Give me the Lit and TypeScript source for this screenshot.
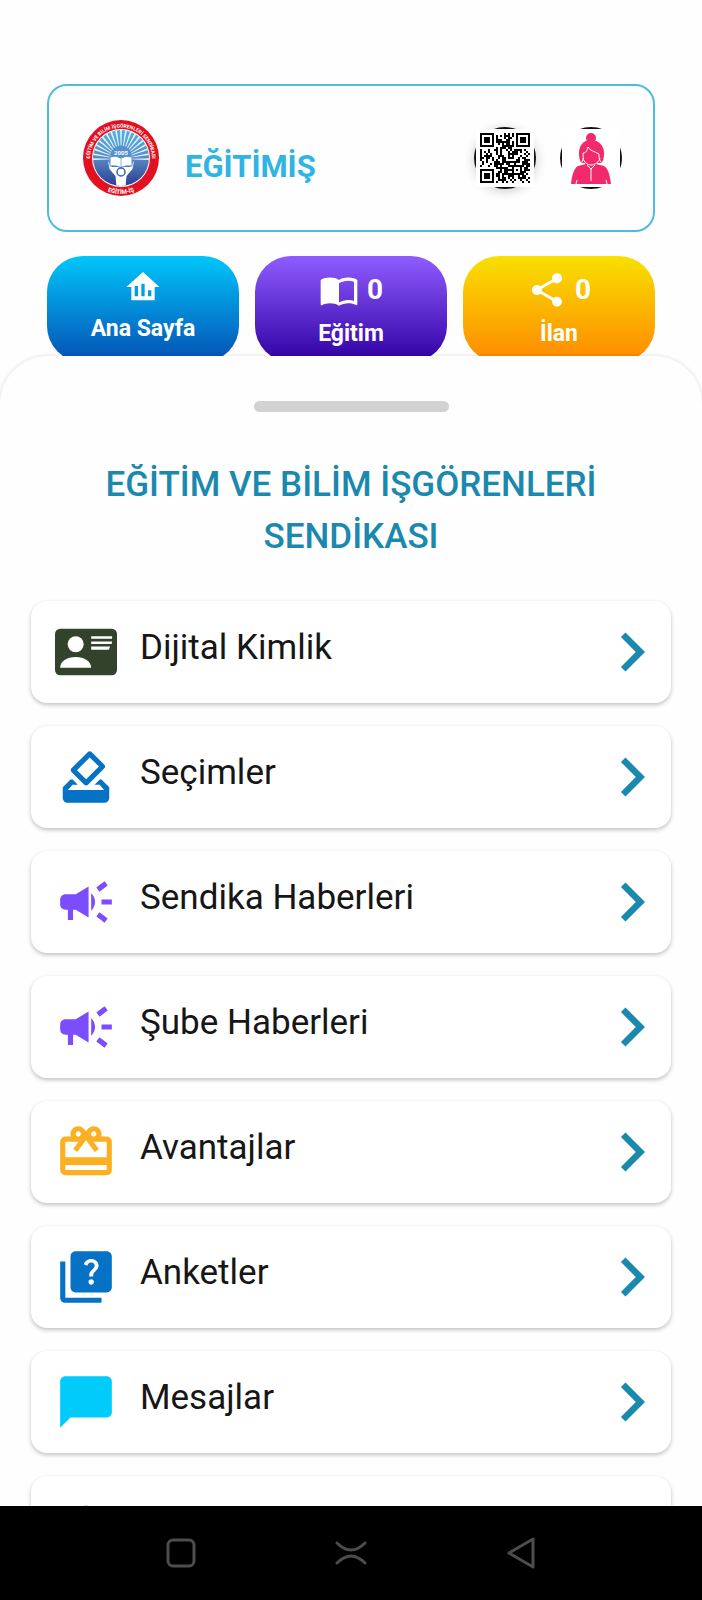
import { LitElement, html, css, svg } from 'lit';

const icons = {
  vote: svg`<path d="M18 13h-.68l-2 2h1.91L19 17H5l1.78-2h2.05l-2-2H6l-3 3v4c0 1.1.89 2 1.99 2H19c1.1 0 2-.89 2-2v-4l-3-3zm-1-5.05l-4.95 4.95-3.54-3.54 4.95-4.95L17 7.95zm-4.24-5.66L6.39 8.66c-.39.39-.39 1.02 0 1.41l4.95 4.95c.39.39 1.02.39 1.41 0l6.36-6.36c.39-.39.39-1.02 0-1.41L14.16 2.3c-.38-.4-1.01-.4-1.4-.01z"/>`,
  campaign: svg`<path d="M18 11v2h4v-2h-4zm-2 6.61c.96.71 2.21 1.65 3.2 2.39.4-.53.8-1.07 1.2-1.6-.99-.74-2.24-1.68-3.2-2.4-.4.54-.8 1.08-1.2 1.61zM20.4 5.6c-.4-.53-.8-1.07-1.2-1.6-.99.74-2.24 1.68-3.2 2.4.4.53.8 1.07 1.2 1.6.96-.72 2.21-1.65 3.2-2.4zM4 9c-1.1 0-2 .9-2 2v2c0 1.1.9 2 2 2h1v4h2v-4h1l5 3V6L8 9H4zm11.5 3c0-1.33-.58-2.53-1.5-3.35v6.69c.92-.81 1.5-2.01 1.5-3.34z"/>`,
  gift: svg`<path d="M20 6h-2.18c.11-.31.18-.65.18-1 0-1.66-1.34-3-3-3-1.05 0-1.96.54-2.5 1.35l-.5.67-.5-.68C10.96 2.54 10.05 2 9 2 7.34 2 6 3.34 6 5c0 .35.07.69.18 1H4c-1.11 0-1.99.89-1.99 2L2 19c0 1.11.89 2 2 2h16c1.11 0 2-.89 2-2V8c0-1.11-.89-2-2-2zm-5-2c.55 0 1 .45 1 1s-.45 1-1 1-1-.45-1-1 .45-1 1-1zM9 4c.55 0 1 .45 1 1s-.45 1-1 1-1-.45-1-1 .45-1 1-1zm11 15H4v-2h16v2zm0-5H4V8h5.08L7 10.83 8.62 12 11 8.76l1-1.36 1 1.36L15.38 12 17 10.83 14.92 8H20v6z"/>`,
  quiz: svg`<path d="M4 6H2v14c0 1.1.9 2 2 2h14v-2H4V6z"/><path d="M20 2H8c-1.1 0-2 .9-2 2v12c0 1.1.9 2 2 2h12c1.1 0 2-.9 2-2V4c0-1.1-.9-2-2-2zm-5.99 13c-.59 0-1.05-.47-1.05-1.05 0-.59.47-1.04 1.05-1.04.59 0 1.04.45 1.04 1.04-.01.58-.45 1.05-1.04 1.05zm2.5-6.17c-.63.93-1.23 1.21-1.56 1.81-.13.24-.18.4-.18 1.18h-1.52c0-.41-.06-1.08.26-1.65.41-.73 1.18-1.16 1.63-1.8.48-.68.21-1.94-1.14-1.94-.88 0-1.32.67-1.5 1.23l-1.37-.57C11.51 5.96 12.52 5 13.99 5c1.23 0 2.08.56 2.51 1.26.37.61.58 1.73.01 2.57z"/>`,
  chat: svg`<path d="M20 2H4c-1.1 0-1.99.9-1.99 2L2 22l4-4h14c1.1 0 2-.9 2-2V4c0-1.1-.9-2-2-2z"/>`,
  idCard: svg`<rect y="3" width="24" height="18" rx="2"/><g fill="#fff"><circle cx="8" cy="9" r="3.1"/><path d="M2 18.1c0-2.6 2.6-4.2 6-4.2s6 1.6 6 4.2zM14 5.9h8.1v1H14zM14 7.900h8.1l-.2 1H14zM14 9.900h7.300l-.4 1.200H14z"/></g>`,
  person: svg`<circle cx="12" cy="7.800" r="4"/><path d="M4 20c0-4 4-6 8-6s8 2 8 6z"/>`,
  home: svg`<path fill-rule="evenodd" d="M21.900 12H19v8H5v-8H2l10-9zM9 17.600v-6.200H7v6.200zM13 17.600V10h-2v7.600zM17 17.600V14h-2v3.600z"/>`,
  book: svg`<path d="M21 5c-1.110-.35-2.330-.5-3.500-.5-1.950 0-4.050.4-5.500 1.500-1.450-1.100-3.550-1.500-5.500-1.500S2.450 4.900 1 6v14.650c0 .25.25.5.5.5.1 0 .15-.05.25-.05C3.100 20.450 5.050 20 6.500 20c1.950 0 4.050.4 5.500 1.500 1.350-.85 3.800-1.500 5.500-1.500 1.650 0 3.350.3 4.750 1.050.1.05.15.05.25.05.25 0 .5-.25.5-.5V6c-.6-.45-1.250-.75-2-1zm0 13.500c-1.100-.35-2.300-.5-3.500-.5-1.700 0-4.150.65-5.500 1.500V8c1.350-.85 3.800-1.500 5.500-1.500 1.200 0 2.400.15 3.500.5v11.500z"/>`,
  share: svg`<path d="M18 16.080c-.76 0-1.440.3-1.960.77L8.910 12.700c.05-.23.09-.46.09-.7s-.04-.47-.09-.7l7.050-4.110c.54.5 1.250.81 2.040.81 1.660 0 3-1.340 3-3s-1.340-3-3-3-3 1.340-3 3c0 .24.04.47.09.7L8.040 9.810C7.500 9.310 6.790 9 6 9c-1.660 0-3 1.340-3 3s1.340 3 3 3c.79 0 1.500-.31 2.040-.81l7.120 4.160c-.05.21-.08.43-.08.65 0 1.610 1.310 2.920 2.920 2.920s2.920-1.310 2.920-2.920-1.310-2.920-2.920-2.920z"/>`,
};

// 25 x 25 modules, three finder squares and filler in between
function qrPath() {
  const size = 25;
  let seed = 2005;
  let d = '';
  const finder = (x: number, y: number) => {
    for (const [fx, fy] of [[0, 0], [18, 0], [0, 18]]) {
      const dx = x - fx;
      const dy = y - fy;
      if (dx >= -1 && dx <= 7 && dy >= -1 && dy <= 7) {
        const ring = Math.max(Math.abs(dx - 3), Math.abs(dy - 3));
        return ring === 3 || ring < 2;
      }
    }
    return null;
  };
  for (let y = 0; y < size; y++) {
    for (let x = 0; x < size; x++) {
      seed = (seed * 1103515245 + 12345) % 2147483648;
      let dark = finder(x, y);
      if (dark === null) {
        const ring = Math.max(Math.abs(x - 18), Math.abs(y - 18));
        dark = ring <= 2 ? ring !== 1 : seed / 2147483648 < 0.54;
      }
      if (dark) d += `M${x} ${y}h1v1h-1z`;
    }
  }
  return d;
}

const rays = Array.from({ length: 19 }, (_, i) => (i - 9) * 10);

export class UnionLogo extends LitElement {

  static get styles() {
    return css`
      :host{
        display: block;
      }
      .logo{
        display: block;
        width: 76px;
        height: 76px;
        font-family: Roboto, sans-serif;
        font-weight: 700;
        fill: #ffffff;
        text-anchor: middle;
      }
    `;
  }

  render() {
    return html`
      <svg class="logo" viewBox="0 0 152 152" role="img" aria-label="Logo">
        <defs>
          <linearGradient id="sky" x1="0" y1="0" x2="0" y2="1">
            <stop offset="0" stop-color="#4fb2e0"/>
            <stop offset=".45" stop-color="#5c8fc8"/>
            <stop offset="1" stop-color="#2a3d92"/>
          </linearGradient>
          <clipPath id="disc"><circle cx="76" cy="76" r="56"/></clipPath>
          <path id="top" d="M17 96A62 62 0 1 1 135 96"/>
          <path id="bottom" d="M4 76A72 72 0 0 0 148 76"/>
        </defs>
        <circle cx="76" cy="76" r="76" fill="#e3101f"/>
        <circle cx="76" cy="76" r="58"/>
        <circle cx="76" cy="76" r="56" fill="url(#sky)"/>
        <g clip-path="url(#disc)">
          ${rays.map(a => svg`<path d="M76 78L74 14h4z" fill="#e4f4fb" transform="rotate(${a} 76 78)"/>`)}
          <circle cx="76" cy="72" r="21" fill="#5590cc"/>
          <path d="M50 82l8 12h36l8-12-3 16-12 14-2 22H67l-2-22-12-14z"/>
          <path d="M54 74q12-4 22 2 10-6 22-2v18q-12-2-22 3-10-5-22-3z" stroke="#5590cc" stroke-width="2"/>
          <path d="M76 76v18" stroke="#8fb2da" stroke-width="2"/>
          <circle cx="76" cy="104" r="8" stroke="#3d5fae" stroke-width="3"/>
        </g>
        <text x="76" y="70" font-size="12">2005</text>
        <text font-size="10"><textPath href="#top" startOffset="50%">EĞİTİM VE BİLİM İŞGÖRENLERİ SENDİKASI</textPath></text>
        <text font-size="12"><textPath href="#bottom" startOffset="50%">EĞİTİM-İŞ</textPath></text>
      </svg>
    `;
  }
}
customElements.define('union-logo', UnionLogo);

export class MenuRow extends LitElement {

  static get properties() {
    return {
      label: {type: String},
      icon: {type: String},
      color: {type: String},
    };
  }

  static get styles() {
    return css`
      :host{
        display: block;
      }
      .row{
        display: flex;
        align-items: center;
        height: 102px;
        padding-left: 24px;
        border-radius: 16px;
        background-color: #ffffff;
        box-shadow: 0 2px 4px rgba(0, 0, 0, 0.24), 0 0 1px rgba(0, 0, 0, 0.04);
        color: #161616;
        text-decoration: none;
      }
      .row__icon{
        flex: none;
        width: 62px;
        height: 62px;
      }
      .row__label{
        flex: 1;
        padding: 0 0 8px 23px;
        font-size: 35px;
        line-height: 44px;
      }
      .row__arrow{
        flex: none;
        width: 78px;
        height: 78px;
        fill: #1b89ae;
      }
    `;
  }

  render() {
    return html`
      <a class="row" href="#">
        <svg class="row__icon" viewBox="0 0 24 24" fill=${this.color} aria-hidden="true">${icons[this.icon]}</svg>
        <span class="row__label">${this.label}</span>
        <svg class="row__arrow" viewBox="0 0 24 24" aria-hidden="true">
          <path d="M10 6L8.590 7.410 13.170 12l-4.580 4.590L10 18l6-6z"/>
        </svg>
      </a>
    `;
  }
}
customElements.define('menu-row', MenuRow);

export class AppRoot extends LitElement {

  static get properties() {
    return {
      tiles: {type: Array},
      rows: {type: Array},
    };
  }

  constructor() {
    super();
    this.tiles = [
      {label: 'Ana Sayfa', icon: 'home', theme: 'tile--blue'},
      {label: 'Eğitim', icon: 'book', theme: 'tile--purple', count: 0},
      {label: 'İlan', icon: 'share', theme: 'tile--yellow', count: 0},
    ];
    this.rows = [
      {label: 'Dijital Kimlik', icon: 'idCard', color: '#33432b'},
      {label: 'Seçimler', icon: 'vote', color: '#0672c6'},
      {label: 'Sendika Haberleri', icon: 'campaign', color: '#7c4dff'},
      {label: 'Şube Haberleri', icon: 'campaign', color: '#7c4dff'},
      {label: 'Avantajlar', icon: 'gift', color: '#fcb021'},
      {label: 'Anketler', icon: 'quiz', color: '#0672c6'},
      {label: 'Mesajlar', icon: 'chat', color: '#00cbfb'},
      {label: '', icon: 'person', color: '#222222'},
    ];
  }

  static get styles() {
    return css`
      :host{
        display: flex;
        flex-direction: column;
        height: 100vh;
        background-color: #fefefe;
        font-family: Roboto, sans-serif;
      }
      button{
        border: 0;
        padding: 0;
        background: none;
        font: inherit;
        color: inherit;
      }
      .header{
        display: flex;
        align-items: center;
        box-sizing: border-box;
        height: 148px;
        margin: 84px 47px 0;
        padding: 0 31px 0 34px;
        border: 2px solid #4fbbdd;
        border-radius: 20px;
      }
      .header__name{
        flex: 1;
        margin: 0;
        padding: 18px 0 0 26px;
        color: #2fb4e4;
        font-size: 31px;
        line-height: 36px;
        font-weight: 700;
      }
      .header__actions{
        display: flex;
        gap: 24px;
      }
      .round{
        display: grid;
        place-items: center;
        width: 62px;
        height: 62px;
        border-radius: 50%;
        background-color: #111111;
      }
      .round--shadow{
        box-shadow: 0 2px 12px rgba(0, 0, 0, 0.2);
      }
      .round__picture{
        width: 58px;
        height: 58px;
        background-color: #ffffff;
      }
      .tiles{
        display: grid;
        grid-template-columns: repeat(3, 1fr);
        gap: 16px;
        margin: 24px 47px 0;
      }
      .tile{
        display: flex;
        flex-direction: column;
        align-items: center;
        gap: 8px;
        height: 106px;
        padding-top: 11px;
        border-radius: 36px;
        color: #ffffff;
        font-weight: 700;
      }
      .tile--blue{
        background: linear-gradient(#00c6fb, #0550b4);
      }
      .tile--purple{
        background: linear-gradient(#8e5cff, #3100a2);
      }
      .tile--yellow{
        background: linear-gradient(#f8e000, #ff8900);
      }
      .tile__top{
        display: flex;
        align-items: center;
        gap: 8px;
        font-size: 28px;
        line-height: 45px;
      }
      .tile__icon{
        width: 40px;
        height: 40px;
        fill: #ffffff;
      }
      .tile__label{
        font-size: 23px;
        line-height: 28px;
      }
      .sheet{
        position: relative;
        flex: 1;
        min-height: 0;
        margin-top: -6px;
        overflow: hidden;
        border-radius: 48px 48px 0 0;
        background-color: #fefefe;
        box-shadow: 0 0 4px rgba(0, 0, 0, 0.14);
      }
      .sheet__handle{
        width: 195px;
        height: 11px;
        margin: 45px auto 47px;
        border-radius: 6px;
        background-color: #d2d2d2;
      }
      .sheet__title{
        margin: 0 31px 38px;
        color: #1b89ae;
        font-size: 35px;
        line-height: 52px;
        font-weight: 500;
        text-align: center;
      }
      .sheet__list{
        display: flex;
        flex-direction: column;
        gap: 23px;
        margin: 0 31px;
      }
      .system{
        position: relative;
        display: flex;
        flex: none;
        justify-content: center;
        align-items: center;
        gap: 136px;
        height: 94px;
        background-color: #000000;
      }
      .system__icon{
        display: block;
        width: 34px;
        height: 34px;
        fill: none;
        stroke: #4d4d4d;
        stroke-width: 3;
        stroke-linecap: round;
        stroke-linejoin: round;
      }
    `;
  }

  renderTile(tile) {
    return html`
      <button class="tile ${tile.theme}">
        <span class="tile__top">
          <svg class="tile__icon" viewBox="0 0 24 24" aria-hidden="true">${icons[tile.icon]}</svg>
          ${tile.count === undefined ? '' : html`<span>${tile.count}</span>`}
        </span>
        <span class="tile__label">${tile.label}</span>
      </button>
    `;
  }

  render() {
    return html`
      <header class="header">
        <union-logo></union-logo>
        <h1 class="header__name">EĞİTİMİŞ</h1>
        <div class="header__actions">
          <button class="round round--shadow" aria-label="QR">
            <svg class="round__picture" viewBox="-2 -2 29 29" shape-rendering="crispEdges" aria-hidden="true">
              <path d=${qrPath()}/>
            </svg>
          </button>
          <button class="round" aria-label="Profil">
            <svg class="round__picture" viewBox="0 0 58 58" fill="#f12a6b" aria-hidden="true">
              <circle cx="29" cy="9" r="5"/>
              <path d="M29 11c-8 0-12 6-12 13 0 5 1 10 4 10h17c3 0 4-5 4-10 0-7-5-13-13-13z"/>
              <path d="M23 32h12v8H23z"/>
              <path d="M9 55c1-9 3-16 7-18l8-2 5 4 5-4 8 2c4 2 6 9 7 18z"/>
              <path d="M20 33c2-3 1-6 1-9 3 0 4-2 5-6 2 4 6 4 11 7 0 3 0 6 2 8M21 29c1 4 4 7 8 7s8-3 9-7M25 36l4 4 4-4M29 40v12M15 51l-1 4M44 51l1 4" fill="none" stroke="#fff" stroke-width="1"/>
            </svg>
          </button>
        </div>
      </header>
      <div class="tiles">${this.tiles.map(tile => this.renderTile(tile))}</div>
      <main class="sheet">
        <div class="sheet__handle"></div>
        <h2 class="sheet__title">EĞİTİM VE BİLİM İŞGÖRENLERİ SENDİKASI</h2>
        <nav class="sheet__list">
          ${this.rows.map(row => html`
            <menu-row .label=${row.label} .icon=${row.icon} .color=${row.color}></menu-row>
          `)}
        </nav>
      </main>
      <footer class="system">
        <button aria-label="Son uygulamalar">
          <svg class="system__icon" viewBox="0 0 34 34"><rect x="4" y="4" width="26" height="26" rx="5"/></svg>
        </button>
        <button aria-label="Ana ekran">
          <svg class="system__icon" viewBox="0 0 34 34"><path d="M3 7q14 14 28 0M3 27q14-14 28 0"/></svg>
        </button>
        <button aria-label="Geri">
          <svg class="system__icon" viewBox="0 0 34 34"><path d="M29 3v28L5 17z"/></svg>
        </button>
      </footer>
    `;
  }
}
customElements.define('app-root', AppRoot);
